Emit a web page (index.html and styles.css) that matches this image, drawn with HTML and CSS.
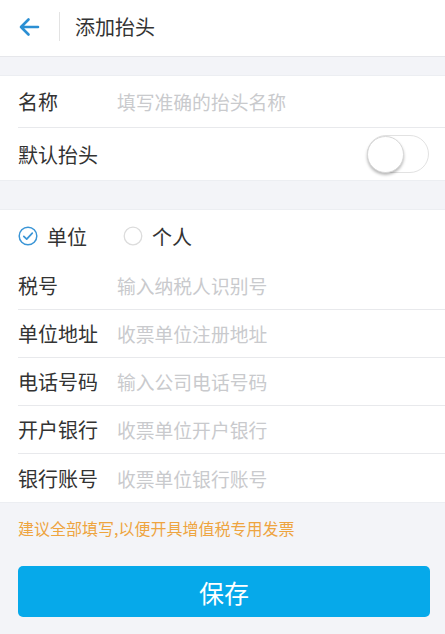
FILE: index.html
```html
<!DOCTYPE html>
<html lang="zh-CN">
<head>
<meta charset="utf-8">
<title>添加抬头</title>
<link rel="stylesheet" href="styles.css">
</head>
<body>
<header class="topbar">
  <span class="back">
    <svg width="22" height="20" viewBox="0 0 22 20"><path d="M20 10H3M10.5 2.5L3 10l7.5 7.5" fill="none" stroke="#2b8fd3" stroke-width="2.6" stroke-linecap="round" stroke-linejoin="round"/></svg>
  </span>
  <span class="divider"></span>
  <span class="title">添加抬头</span>
</header>

<section class="group group-first">
  <div class="row tall">
    <span class="label">名称</span>
    <span class="ph">填写准确的抬头名称</span>
  </div>
  <div class="row tall last">
    <span class="label">默认抬头</span>
    <span class="switch"><span class="knob"></span></span>
  </div>
</section>

<section class="group group-second">
  <div class="row tall last radios">
    <span class="radio">
      <svg width="20" height="20" viewBox="0 0 20 20"><circle cx="10" cy="10" r="8.8" fill="none" stroke="#3a95d6" stroke-width="1.5"/><path d="M5.8 10.3l2.9 2.9 5.6-6" fill="none" stroke="#3a95d6" stroke-width="1.7" stroke-linecap="round" stroke-linejoin="round"/></svg>
      <span class="rtext">单位</span>
    </span>
    <span class="radio">
      <svg width="20" height="20" viewBox="0 0 20 20"><circle cx="10" cy="10" r="8.8" fill="none" stroke="#dcdcdc" stroke-width="1.3"/></svg>
      <span class="rtext">个人</span>
    </span>
  </div>
  <div class="row">
    <span class="label">税号</span>
    <span class="ph">输入纳税人识别号</span>
  </div>
  <div class="row">
    <span class="label">单位地址</span>
    <span class="ph">收票单位注册地址</span>
  </div>
  <div class="row">
    <span class="label">电话号码</span>
    <span class="ph">输入公司电话号码</span>
  </div>
  <div class="row">
    <span class="label">开户银行</span>
    <span class="ph">收票单位开户银行</span>
  </div>
  <div class="row last">
    <span class="label">银行账号</span>
    <span class="ph">收票单位银行账号</span>
  </div>
</section>

<p class="hint">建议全部填写,以便开具增值税专用发票</p>

<div class="btnwrap"><span class="save">保存</span></div>
</body>
</html>
```

FILE: styles.css
```css
* { box-sizing: border-box; }
html, body {
  margin: 0;
  padding: 0;
}
body {
  background: #f3f4f8;
  font-family: "Noto Sans CJK SC", "Noto Sans", sans-serif;
  color: #333;
  width: 445px;
  height: 634px;
  overflow: hidden;
}
.topbar {
  height: 57px;
  background: #fff;
  border-bottom: 1px solid #e6e7eb;
  display: flex;
  align-items: center;
  padding-left: 18px;
}
.back {
  width: 22px;
  height: 20px;
  display: flex;
  margin-top: -3px;
}
.divider {
  width: 1px;
  height: 29px;
  background: #e3e3e3;
  margin-left: 19px;
  margin-top: -4px;
}
.title {
  font-size: 20px;
  color: #333;
  margin-left: 15px;
  margin-top: -4px;
}
.group {
  background: #fff;
  border-top: 1px solid #eceef2;
  border-bottom: 1px solid #eceef2;
}
.group-first { margin-top: 18px; }
.group-second { margin-top: 28px; }
.row {
  margin-left: 18px;
  height: 48px;
  display: flex;
  align-items: center;
  border-bottom: 1px solid #e8e9ec;
}
.row.tall { height: 52px; }
.row.last { border-bottom: none; }
.label {
  width: 99px;
  flex: none;
  font-size: 20px;
  color: #333;
  white-space: nowrap;
}
.ph {
  font-size: 18.8px;
  color: #c9cacd;
  white-space: nowrap;
}
.switch {
  margin-left: auto;
  margin-right: 16px;
  width: 62px;
  height: 38px;
  border: 1.5px solid #e2e2e2;
  border-radius: 19px;
  background: #fff;
  display: flex;
  align-items: center;
}
.knob {
  width: 37px;
  height: 37px;
  border-radius: 50%;
  background: #fff;
  margin-left: -1.5px;
  border: 1px solid #d8d8d8;
  box-shadow: 0 2px 3px rgba(0,0,0,0.28);
}
.radios { gap: 36px; }
.radio {
  display: flex;
  align-items: center;
  gap: 9px;
}
.radio svg { flex: none; }
.rtext {
  font-size: 20px;
  color: #333;
}
.hint {
  margin: 0;
  padding: 14px 18px 0;
  height: 63px;
  font-size: 16px;
  line-height: 22px;
  color: #eea43f;
}
.btnwrap {
  padding: 0 15px 0 18px;
}
.save {
  display: flex;
  align-items: center;
  justify-content: center;
  height: 51px;
  border-radius: 5px;
  background: #06a9ea;
  color: #fff;
  font-size: 25px;
}
```
